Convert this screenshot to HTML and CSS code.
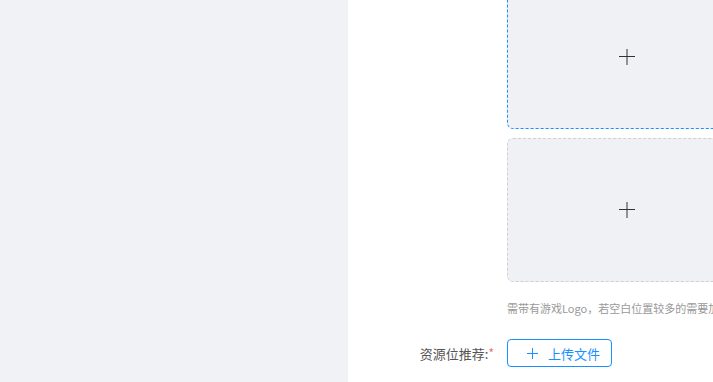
FILE: index.html
```html
<!DOCTYPE html>
<html lang="zh-CN">

<head>
    <meta charset="UTF-8">
    <meta name="viewport" content="width=device-width, initial-scale=1.0">
    <title>资源位上传</title>
    <link rel="stylesheet" href="styles.css">
</head>

<body>

    <aside class="sidebar"></aside>

    <main class="content">
        <div class="form-item">
            <div class="form-label"></div>
            <div class="form-body">
                <div class="upload-list">
                    <div class="upload-box active">
                        <svg class="plus" width="16" height="16" viewBox="0 0 16 16">
                            <path d="M0 7.5h16M8 0v16" stroke="currentColor" stroke-width="1" fill="none" />
                        </svg>
                    </div>
                    <div class="upload-box">
                        <svg class="plus" width="16" height="16" viewBox="0 0 16 16">
                            <path d="M0 7.5h16M8 0v16" stroke="currentColor" stroke-width="1" fill="none" />
                        </svg>
                    </div>
                </div>
                <div class="hint">需带有游戏Logo，若空白位置较多的需要加上背景图，图片尺寸为750*300</div>
            </div>
        </div>

        <div class="form-item row">
            <div class="form-label">资源位推荐:<span class="required">*</span></div>
            <div class="form-body">
                <button class="upload-btn">
                    <svg width="11" height="11" viewBox="0 0 11 11">
                        <path d="M0 5.5h11M5.5 0v11" stroke="currentColor" stroke-width="1" fill="none" />
                    </svg>
                    <span>上传文件</span>
                </button>
            </div>
        </div>
    </main>

</body>

</html>
```

FILE: styles.css
```css
* {
    box-sizing: border-box;
    margin: 0;
    padding: 0;
}

html,
body {
    height: 100%;
    overflow: hidden;
}

body {
    font-family: "Noto Sans CJK SC", "Noto Sans", sans-serif;
    background-color: #f0f2f5;
    display: flex;
}

.sidebar {
    width: 348px;
    flex-shrink: 0;
    background-color: #f0f2f5;
}

.content {
    flex: 1;
    background-color: #fff;
    overflow: hidden;
}

.form-item {
    display: flex;
}

.form-label {
    width: 159px;
    flex-shrink: 0;
    text-align: right;
    padding-right: 13px;
    font-size: 13px;
    color: #555;
}

.required {
    color: #f56c6c;
    vertical-align: top;
    font-size: 12px;
}

.form-body {
    flex: 1;
}

.upload-list {
    margin-top: -15px;
}

.upload-box {
    width: 240px;
    height: 144px;
    border: 1px dashed #d0d0d4;
    border-radius: 6px;
    background-color: #f0f1f5;
    display: flex;
    align-items: center;
    justify-content: center;
    color: #333;
    margin-bottom: 9px;
}

.upload-box.active {
    border-color: #1890ff;
}

.hint {
    font-size: 11px;
    line-height: 18px;
    color: #999;
    white-space: nowrap;
    margin-top: 17px;
}

.row {
    margin-top: 22px;
    align-items: center;
}

.upload-btn {
    height: 28px;
    width: 105px;
    display: flex;
    align-items: center;
    padding: 0 0 0 19px;
    gap: 10px;
    border: 1px solid #1890ff;
    border-radius: 4px;
    background-color: #fff;
    color: #1890ff;
    font-family: inherit;
    font-size: 13px;
    cursor: pointer;
}
```
